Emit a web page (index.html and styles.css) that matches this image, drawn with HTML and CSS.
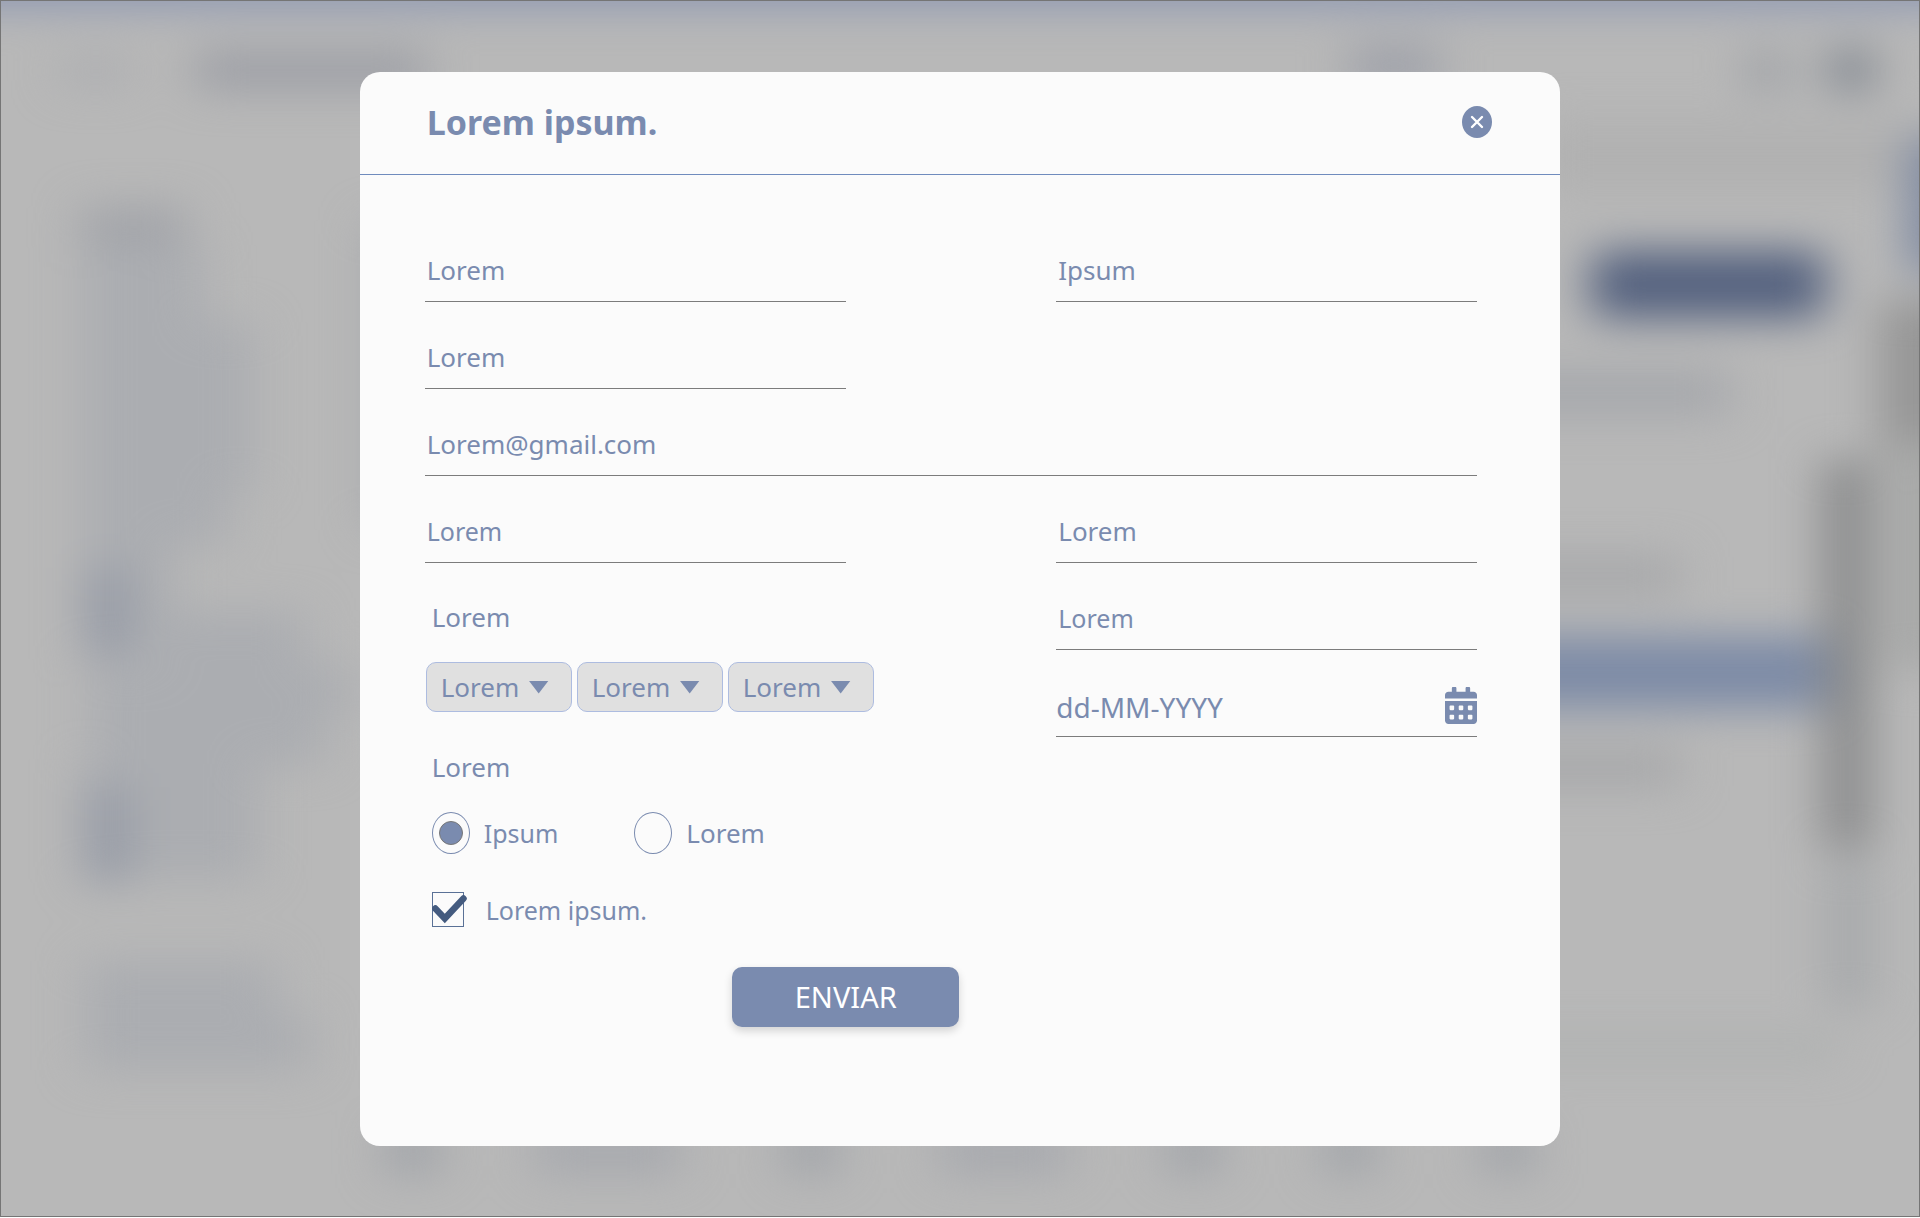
FILE: index.html
```html
<!DOCTYPE html>
<html lang="es">
<head>
<meta charset="utf-8">
<meta name="viewport" content="width=device-width, initial-scale=1">
<title>Lorem ipsum.</title>
<link rel="stylesheet" href="styles.css">
</head>
<body>
<div class="page">
  <svg class="backdrop" viewBox="0 0 1920 1218" preserveAspectRatio="none" aria-hidden="true">
    <defs>
      <filter id="soft" x="-200" y="-200" width="2400" height="1700" filterUnits="userSpaceOnUse" color-interpolation-filters="sRGB"><feGaussianBlur stdDeviation="23 20"/></filter>
    </defs>
    <g filter="url(#soft)">
      <rect x="-100" y="-60" width="2120" height="66" fill="#8e98b2"/>
      <rect x="60" y="55" width="70" height="30" fill="#adaeb1"/>
      <rect x="195" y="50" width="230" height="38" fill="#9c9ea5"/>
      <rect x="1350" y="46" width="90" height="38" fill="#9c9fa8"/>
      <rect x="1540" y="120" width="420" height="70" fill="#b1b1b1"/>
      <rect x="1748" y="50" width="40" height="40" fill="#9da0a5"/>
      <rect x="1830" y="48" width="44" height="42" fill="#80868f"/>
      <rect x="80" y="206" width="105" height="42" fill="#a2a4a9"/>
      <rect x="82" y="245" width="120" height="80" fill="#abadb1"/>
      <rect x="82" y="322" width="170" height="170" fill="#abadb1"/>
      <rect x="82" y="490" width="145" height="55" fill="#abadb1"/>
      <rect x="82" y="540" width="90" height="120" fill="#abadb1"/>
      <rect x="84" y="568" width="44" height="89" fill="#969ba6"/>
      <rect x="160" y="612" width="145" height="60" fill="#abadb1"/>
      <rect x="90" y="665" width="260" height="50" fill="#abadb1"/>
      <rect x="90" y="710" width="235" height="55" fill="#abadb1"/>
      <rect x="82" y="760" width="175" height="120" fill="#abadb1"/>
      <rect x="84" y="788" width="44" height="96" fill="#969ba6"/>
      <rect x="84" y="962" width="190" height="55" fill="#abadb1"/>
      <rect x="84" y="1015" width="225" height="57" fill="#abadb1"/>
      <rect x="368" y="220" width="60" height="310" fill="#a8aaad"/>
      <rect x="1880" y="300" width="120" height="160" fill="#969696"/>
      <rect x="1890" y="440" width="120" height="230" fill="#a8a9a8"/>
      <rect x="1908" y="138" width="110" height="134" fill="#808ba2"/>
      <rect x="1592" y="250" width="234" height="68" rx="14" fill="#55627f"/>
      <rect x="1500" y="370" width="230" height="46" fill="#a6a8ac"/>
      <rect x="1500" y="556" width="180" height="40" fill="#a7a8aa"/>
      <rect x="1500" y="748" width="180" height="40" fill="#a7a8aa"/>
      <rect x="1500" y="637" width="325" height="72" fill="#7d8ba6"/>
      <rect x="1826" y="860" width="48" height="150" fill="#a7a9ab"/>
      <rect x="1824" y="460" width="48" height="390" fill="#8a8b8c"/>
      <rect x="1500" y="1040" width="340" height="20" fill="#acafae"/>
      <rect x="385" y="1130" width="55" height="46" fill="#a1a4a9"/>
      <rect x="535" y="1130" width="145" height="46" fill="#a7a9ae"/>
      <rect x="785" y="1130" width="52" height="46" fill="#a1a4a9"/>
      <rect x="940" y="1130" width="128" height="46" fill="#a7a9ae"/>
      <rect x="1168" y="1130" width="52" height="46" fill="#a1a4a9"/>
      <rect x="1324" y="1130" width="52" height="46" fill="#a1a4a9"/>
      <rect x="1482" y="1130" width="52" height="46" fill="#a1a4a9"/>
    </g>
  </svg>

  <main class="modal" role="dialog" aria-labelledby="modal-title">
    <header class="modal-header">
      <h1 class="modal-title" id="modal-title">Lorem ipsum.</h1>
      <button class="close" type="button" aria-label="Cerrar">
        <svg viewBox="0 0 30 32" aria-hidden="true"><ellipse cx="15" cy="16" rx="15" ry="16" fill="#7a8baf"/><path d="M10 11l10 10M20 11L10 21" stroke="#fff" stroke-width="2.4" stroke-linecap="round"/></svg>
      </button>
    </header>

    <form class="form">
      <div class="field"><input class="input" type="text" aria-label="Lorem" value="Lorem"></div>
      <div class="field"><input class="input" type="text" aria-label="Ipsum" value="Ipsum"></div>
      <div class="field"><input class="input" type="text" aria-label="Lorem" value="Lorem"></div>
      <div class="field wide"><input class="input" type="email" aria-label="Email" value="Lorem@gmail.com"></div>

      <div class="column">
        <div class="field"><input class="input small" type="text" aria-label="Lorem" value="Lorem"></div>

        <fieldset class="group">
          <legend class="group-label">Lorem</legend>
          <div class="selects">
            <span class="select-box"><select class="select" aria-label="Lorem 1"><option>Lorem</option></select></span>
            <span class="select-box"><select class="select" aria-label="Lorem 2"><option>Lorem</option></select></span>
            <span class="select-box"><select class="select" aria-label="Lorem 3"><option>Lorem</option></select></span>
          </div>
        </fieldset>

        <fieldset class="group">
          <legend class="group-label">Lorem</legend>
          <div class="radios">
            <label class="choice small"><input class="radio" type="radio" name="option" checked>Ipsum</label>
            <label class="choice"><input class="radio" type="radio" name="option">Lorem</label>
          </div>
        </fieldset>

        <label class="choice accept small">
          <span class="check-box">
            <input class="checkbox" type="checkbox" checked>
            <svg class="check-mark" viewBox="0 0 35 36" aria-hidden="true"><path d="M3.300 16.500L12.800 26.500L31.500 6.500" fill="none" stroke="#445b7f" stroke-width="6.500" stroke-linecap="round" stroke-linejoin="miter"/></svg>
          </span>
          Lorem ipsum.
        </label>
      </div>

      <div class="column">
        <div class="field"><input class="input" type="text" aria-label="Lorem" value="Lorem"></div>
        <div class="field"><input class="input small" type="text" aria-label="Lorem" value="Lorem"></div>
        <div class="field date-field">
          <input class="input date" type="text" aria-label="Fecha" value="dd-MM-YYYY">
          <button class="calendar" type="button" aria-label="Abrir calendario">
            <svg viewBox="0 0 448 512" preserveAspectRatio="none" aria-hidden="true"><path fill="#7a8baf" d="M0 464c0 26.500 21.500 48 48 48h352c26.500 0 48-21.500 48-48V192H0v272zm320-196c0-6.600 5.400-12 12-12h40c6.600 0 12 5.400 12 12v40c0 6.600-5.400 12-12 12h-40c-6.600 0-12-5.400-12-12v-40zm0 128c0-6.600 5.400-12 12-12h40c6.600 0 12 5.400 12 12v40c0 6.600-5.400 12-12 12h-40c-6.600 0-12-5.400-12-12v-40zM192 268c0-6.600 5.400-12 12-12h40c6.600 0 12 5.400 12 12v40c0 6.600-5.400 12-12 12h-40c-6.600 0-12-5.400-12-12v-40zm0 128c0-6.600 5.400-12 12-12h40c6.600 0 12 5.400 12 12v40c0 6.600-5.400 12-12 12h-40c-6.600 0-12-5.400-12-12v-40zM64 268c0-6.600 5.400-12 12-12h40c6.600 0 12 5.400 12 12v40c0 6.600-5.400 12-12 12H76c-6.600 0-12-5.400-12-12v-40zm0 128c0-6.600 5.400-12 12-12h40c6.600 0 12 5.400 12 12v40c0 6.600-5.400 12-12 12H76c-6.600 0-12-5.400-12-12v-40zM400 64h-48V16c0-8.800-7.200-16-16-16h-32c-8.800 0-16 7.200-16 16v48H160V16c0-8.800-7.200-16-16-16h-32c-8.800 0-16 7.200-16 16v48H48C21.500 64 0 85.500 0 112v48h448v-48c0-26.500-21.500-48-48-48z"/></svg>
          </button>
        </div>
      </div>

      <div class="actions"><button class="submit" type="submit">ENVIAR</button></div>
    </form>
  </main>
</div>
</body>
</html>
```
FILE: styles.css
```css
* {
  box-sizing: border-box;
}

body {
  margin: 0;
  padding-bottom: 1px;
  background: #fff;
  color: #7a8baf;
  font-family: "Noto Sans", "Open Sans", sans-serif;
  font-size: 26px;
  line-height: 40px;
}

input,
select,
button {
  margin: 0;
  color: inherit;
  font: inherit;
}

.page {
  position: relative;
  min-height: calc(100vh - 1px);
  padding: 71px 0 69px;
  border: 1px solid #757575;
  background: #b8b8b8;
  overflow: hidden;
}

/* Defocused page behind the dialog */
.backdrop {
  position: absolute;
  inset: 0;
  width: 100%;
  height: 100%;
}

.modal {
  position: relative;
  width: 62.6%;
  min-width: 960px;
  margin: 0 auto;
  border-radius: 20px;
  background: #fbfbfb;
}

.modal-header {
  display: flex;
  align-items: center;
  justify-content: space-between;
  height: 103px;
  padding: 0 68px 2px 67px;
  border-bottom: 1px solid #6f8bbd;
}

.modal-title {
  margin: 0;
  font-size: 34px;
  font-weight: 700;
}

.close,
.calendar {
  padding: 0;
  border: 0;
  background: none;
  cursor: pointer;
}

.close {
  width: 30px;
  height: 32px;
}

.close svg,
.calendar svg {
  display: block;
  width: 100%;
  height: 100%;
}

.form {
  display: grid;
  grid-template-columns: repeat(2, minmax(0, 1fr));
  column-gap: 20%;
  padding: 40px 83px 119px 65px;
}

.wide {
  grid-column: 1 / -1;
}

.field {
  padding-top: 35px;
}

.input {
  display: block;
  width: 100%;
  height: 52px;
  padding: 0 2px 12px;
  border: 0;
  border-bottom: 1px solid #7c7c7c;
  border-radius: 0;
  outline: 0;
  background: transparent;
}

.small {
  font-size: 25px;
}

.date-field {
  display: grid;
  align-items: center;
}

.date-field > * {
  grid-area: 1 / 1;
}

.date {
  padding: 0 40px 7px 0;
  font-size: 28px;
}

.calendar {
  justify-self: end;
  width: 32px;
  height: 37px;
  margin-bottom: 12px;
}

.group {
  min-width: 0;
  margin: 0;
  padding: 0;
  border: 0;
}

.group-label {
  margin-bottom: 25px;
  padding: 34px 0 0 7px;
}

.selects {
  display: flex;
  gap: 5px;
  padding: 0 0 1px 1px;
}

.select-box {
  display: grid;
  align-items: center;
}

.select-box > *,
.select-box::after {
  grid-area: 1 / 1;
}

.select-box::after {
  content: "";
  justify-self: end;
  width: 20px;
  height: 13px;
  margin-right: 23px;
  background: #7a8baf;
  clip-path: polygon(0 0, 100% 0, 50% 100%);
  pointer-events: none;
}

.select {
  width: 146px;
  height: 50px;
  padding: 0 0 0 14px;
  border: 1px solid #adbce0;
  border-radius: 10px;
  background: #e0e0e0;
  appearance: none;
}

.radios {
  display: flex;
  gap: 76px;
  padding-left: 7px;
}

.choice {
  display: flex;
  align-items: center;
  gap: 14px;
}

.radio {
  display: grid;
  place-items: center;
  width: 38px;
  height: 42px;
  border: 1px solid #7a8baf;
  border-radius: 50%;
  appearance: none;
}

.radio:checked::before {
  content: "";
  width: 22px;
  height: 22px;
  border: 1px solid #777;
  border-radius: 50%;
  background: #7a8baf;
}

.accept {
  gap: 19px;
  margin-top: 36px;
  padding-left: 7px;
}

.check-box {
  display: grid;
  width: 35px;
}

.check-box > * {
  grid-area: 1 / 1;
}

.checkbox {
  width: 32px;
  height: 35px;
  border: 1px solid #5a7196;
  appearance: none;
}

.check-mark {
  width: 35px;
  height: 36px;
  pointer-events: none;
}

.actions {
  grid-column: 1 / -1;
  display: flex;
  justify-content: center;
  width: 80%;
  padding-top: 37px;
}

.submit {
  width: 227px;
  height: 60px;
  padding: 0;
  border: 0;
  border-radius: 10px;
  background: #7a8baf;
  box-shadow: 0 4px 8px rgb(0 0 0 / 16%);
  color: #fff;
  font-size: 29px;
  cursor: pointer;
}
```
